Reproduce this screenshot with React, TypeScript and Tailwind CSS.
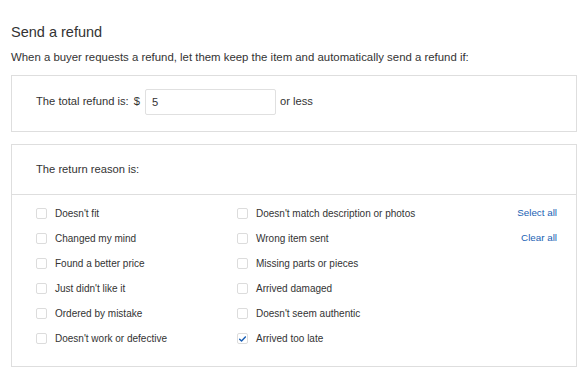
import React, { useState } from "react";

// Formulaire de remboursement automatique

const leftReasons = [
  "Doesn't fit",
  "Changed my mind",
  "Found a better price",
  "Just didn't like it",
  "Ordered by mistake",
  "Doesn't work or defective",
];

const rightReasons = [
  "Doesn't match description or photos",
  "Wrong item sent",
  "Missing parts or pieces",
  "Arrived damaged",
  "Doesn't seem authentic",
  "Arrived too late",
];

function CheckRow({
  label,
  checked,
  onToggle,
}: {
  label: string;
  checked: boolean;
  onToggle: () => void;
}) {
  return (
    <label className="flex h-[25px] cursor-pointer items-center" onClick={onToggle}>
      <span className="flex h-[11px] w-[11px] items-center justify-center rounded-[2px] border border-[#dcdcdc] bg-white">
        {checked && (
          <svg viewBox="0 0 12 12" className="h-[10px] w-[10px]">
            <path
              d="M2.2 6.4 L4.7 8.8 L9.8 3.2"
              fill="none"
              stroke="#1a5fb4"
              strokeWidth="1.9"
              strokeLinecap="round"
              strokeLinejoin="round"
            />
          </svg>
        )}
      </span>
      <span className="ml-[8px] text-[10px] text-[#333]">{label}</span>
    </label>
  );
}

export default function App() {
  const [amount, setAmount] = useState("5");
  const [checked, setChecked] = useState<Record<string, boolean>>({
    "Arrived too late": true,
  });

  const toggle = (r: string) => setChecked(prev => ({ ...prev, [r]: !prev[r] }));
  const all = [...leftReasons, ...rightReasons];

  return (
    <div
      className="min-h-[367px] bg-white pl-[11px] pr-[1px] pt-[22px] text-[#333]"
      style={{ fontFamily: '"Liberation Sans", Arial, sans-serif' }}
    >
      <h2 className="text-[14.5px] leading-[20px]">Send a refund</h2>
      <p className="mt-[7px] text-[11.4px] leading-[16px]">
        When a buyer requests a refund, let them keep the item and automatically send a refund if:
      </p>

      {/* Montant */}
      <div className="mt-[10px] flex h-[57px] items-center border border-[#dedede] pb-[4px] pl-[24px] text-[11.2px]">
        <span>The total refund is:</span>
        <span className="ml-[5px]">$</span>
        <input
          value={amount}
          onChange={e => setAmount(e.target.value)}
          className="ml-[5px] h-[26px] w-[131px] rounded-[2px] border border-[#e0e0e0] px-[6px] text-[11.2px] text-[#333] outline-none"
        />
        <span className="ml-[4px]">or less</span>
      </div>

      {/* Raisons du retour */}
      <div className="mt-[12px] border border-[#dedede]">
        <div className="flex h-[50px] items-center border-b border-[#dedede] pl-[24px] text-[11.2px]">
          The return reason is:
        </div>
        <div className="flex pb-[15px] pl-[24px] pr-[19px] pt-[6px]">
          <div className="w-[201px]">
            {leftReasons.map(r => (
              <CheckRow key={r} label={r} checked={!!checked[r]} onToggle={() => toggle(r)} />
            ))}
          </div>
          <div className="flex-1">
            {rightReasons.map(r => (
              <CheckRow key={r} label={r} checked={!!checked[r]} onToggle={() => toggle(r)} />
            ))}
          </div>
          <div className="flex flex-col items-end text-[9.8px] text-[#1a5fb4]">
            <button
              className="h-[25px]"
              onClick={() => setChecked(Object.fromEntries(all.map(r => [r, true])))}
            >
              Select all
            </button>
            <button className="h-[25px]" onClick={() => setChecked({})}>
              Clear all
            </button>
          </div>
        </div>
      </div>
    </div>
  );
}
